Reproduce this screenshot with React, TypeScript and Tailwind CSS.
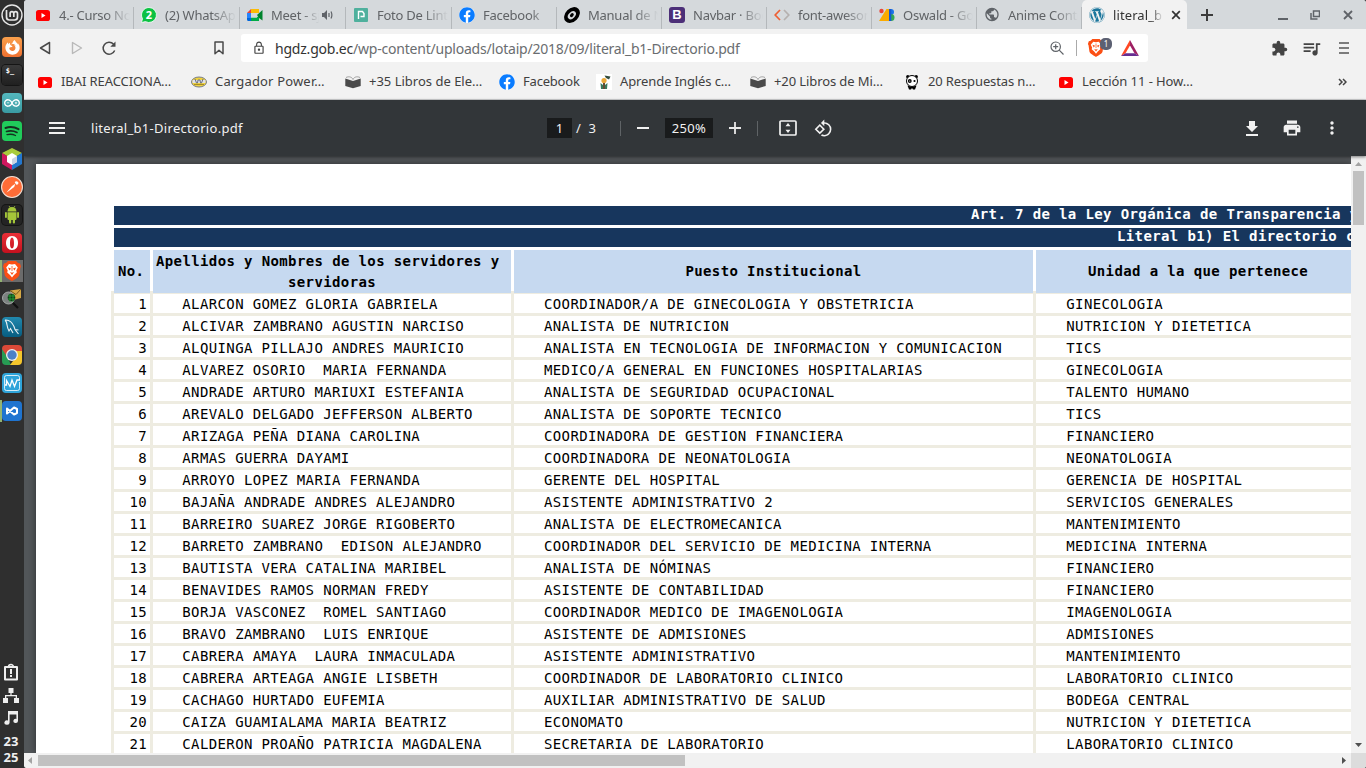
import React from 'react';
import { FaFacebook, FaWordpress, FaFirefoxBrowser } from 'react-icons/fa';
import { SiArduino } from 'react-icons/si';
import { MdExtension, MdQueueMusic, MdPrint, MdMoreVert, MdRotate90DegreesCcw, MdLockOutline, MdPublic } from 'react-icons/md';

const Book = () => (
  <svg width="16" height="16" viewBox="0 0 16 16">
    <path d="M.3 4.500L8 7l7.700-2.500v7.500L8 14.300.3 12z" fill="#4a4a4a" />
    <path d="M1 3.500C4 2 7 3 8 5.500 9 3 12 2 15 3.500" fill="none" stroke="#999" strokeWidth=".9" />
  </svg>
);

const Youtube = () => (
  <svg width="16" height="16" viewBox="0 0 16 16">
    <rect x="1" y="3" width="14" height="11" rx="2.600" fill="#f00" />
    <path d="M6.500 6v5l4-2.500z" fill="#fff" />
  </svg>
);

const Facebook = () => (
  <span className="flex size-4 items-center justify-center rounded-full bg-white text-[#0a7cff]">
    <FaFacebook size={16} />
  </span>
);

const Whatsapp = () => (
  <svg width="16" height="16" viewBox="0 0 16 16">
    <path d="M8 .5a7.500 7.500 0 11-3.600 14.100L.5 15.500l1-3.800A7.500 7.500 0 018 .5z" fill="#0cc143" stroke="#fff" strokeWidth=".8" />
    <text x="8" y="12" textAnchor="middle" fontSize="11" fontWeight="700" fill="#fff" fontFamily="Noto Sans, sans-serif">2</text>
  </svg>
);

const Meet = () => (
  <svg width="16" height="16" viewBox="0 0 16 16">
    <path d="M4 2h8v4H4z" fill="#fbbc04" />
    <path d="M0 6l4-4v4z" fill="#ea4335" />
    <path d="M0 6h4v5H0z" fill="#2684fc" />
    <path d="M0 11h4v3H1.500A1.500 1.500 0 010 12.500z" fill="#0066da" />
    <path d="M4 10.500h5.500L12 9v5H4z" fill="#00ac47" />
    <path d="M4 6h6v4.500H4z" fill="#d5d9dc" />
    <path d="M10 8l5.500-5v10.500L12 11z" fill="#00832d" />
  </svg>
);

const PdfDrive = () => (
  <svg width="16" height="16" viewBox="0 0 16 16">
    <rect x="1" y="1" width="14" height="14" rx="1" fill="#4fb09d" />
    <path d="M5.500 12V4.500h4l1.500 2v3H7.500" fill="none" stroke="#fff" strokeWidth="1.400" />
  </svg>
);

const Disc = () => (
  <svg width="16" height="16" viewBox="0 0 16 16">
    <ellipse cx="8" cy="8" rx="9" ry="6.600" transform="rotate(-45 8 8)" fill="#000" />
    <ellipse cx="7.800" cy="8" rx="4.700" ry="3.200" transform="rotate(-45 8 8)" fill="#d5d9dc" />
    <ellipse cx="7.800" cy="8" rx="2.200" ry="1.600" transform="rotate(-45 8 8)" fill="#000" />
  </svg>
);

const Bootstrap = () => (
  <span className="flex size-4 items-center justify-center rounded-[3px] bg-[#4c2f78] font-['Liberation_Sans',sans-serif] text-[13px] leading-none font-bold text-white">B</span>
);

const Code = () => (
  <svg width="16" height="16" viewBox="0 0 16 16" fill="none" strokeWidth="1.700">
    <path d="M6 3L1.200 8 6 13" stroke="#ee6034" />
    <path d="M10 3l4.800 5L10 13" stroke="#b5b0ae" />
  </svg>
);

const GoogleFonts = () => (
  <svg width="16" height="16" viewBox="0 0 16 16">
    <path d="M7.500 2h2.500v12H0z" fill="#fbab00" />
    <circle cx="2.500" cy="4" r="2.200" fill="#ea4335" />
    <path d="M10 2h2a3 3 0 010 6h-2z" fill="#1a73e8" />
    <path d="M10 7h2a3.500 3.500 0 010 7h-2z" fill="#34a853" />
    <path d="M10 2h2.300v12H10z" fill="#1558d0" />
  </svg>
);

const Hat = () => (
  <svg width="16" height="16" viewBox="0 0 16 16">
    <ellipse cx="8" cy="8" rx="7.500" ry="5" fill="#efd23f" stroke="#777d8c" />
    <path d="M1.500 6h13v3h-13z" fill="#dfe1e8" />
    <path d="M4 5l1.500 4h1L7 6h2l.5 3h1L12 5" stroke="#6a7083" fill="none" />
    <path d="M3 10.500h10" stroke="#a78e25" />
  </svg>
);

const Flower = () => (
  <svg width="16" height="16" viewBox="0 0 16 16">
    <path fill="#fff" d="M0 0h16v16H0z" />
    <circle cx="8" cy="6.500" r="2.600" fill="#e9a83a" />
    <path d="M8.500 1.500l6 1-1.500 3-3-1.500z" fill="#344d3d" />
    <path d="M4.500 9l2.500 2v4H5zM11.500 9L9 11v4h2z" fill="#39795c" />
    <path d="M7 9h2v6H7z" fill="#654c35" />
  </svg>
);

const Panda = () => (
  <svg width="16" height="16" viewBox="0 0 16 16">
    <circle cx="3.800" cy="2.700" r="1.700" /><circle cx="12.200" cy="2.700" r="1.700" />
    <circle cx="8" cy="7" r="5.500" fill="#fff" stroke="#000" />
    <circle cx="5.800" cy="7" r="1.900" /><circle cx="10.500" cy="7" r="1.100" />
    <circle cx="5.800" cy="7" r=".6" fill="#fff" />
    <path d="M3.500 11.500l1.500 4h2L8 14l1 1.500h2l1.500-4L8 13z" />
  </svg>
);

type Tab = { icon: React.ReactNode; text: string; w: string; sound?: boolean };
const tabs: Tab[] = [
  { icon: <Youtube />, text: '4.- Curso No', w: 'w-[106px]' },
  { icon: <Whatsapp />, text: '(2) WhatsApp', w: 'w-[106px]' },
  { icon: <Meet />, text: 'Meet - sjb', w: 'w-[106px]', sound: true },
  { icon: <PdfDrive />, text: 'Foto De Linte', w: 'w-[106px]' },
  { icon: <Facebook />, text: 'Facebook', w: 'w-[105px]' },
  { icon: <Disc />, text: 'Manual de N', w: 'w-[105px]' },
  { icon: <Bootstrap />, text: 'Navbar · Boo', w: 'w-[105px]' },
  { icon: <Code />, text: 'font-awesom', w: 'w-[105px]' },
  { icon: <GoogleFonts />, text: 'Oswald - Goo', w: 'w-[105px]' },
  { icon: <MdPublic size={17} color="#5f6368" />, text: 'Anime Contr', w: 'w-[105px]' },
];

const bookmarks = [
  { icon: <Youtube />, text: 'IBAI REACCIONA…', w: 'w-[154px]', cls: 'tracking-[-0.08px]' },
  { icon: <Hat />, text: 'Cargador Power…', w: 'w-[154px]', cls: 'tracking-[0.17px]' },
  { icon: <Book />, text: '+35 Libros de Ele…', w: 'w-[154px]', cls: 'tracking-[0px]' },
  { icon: <Facebook />, text: 'Facebook', w: 'w-[97px]', cls: 'tracking-[-0.2px]' },
  { icon: <Flower />, text: 'Aprende Inglés c…', w: 'w-[154px]', cls: 'tracking-[-0.1px]' },
  { icon: <Book />, text: '+20 Libros de Mi…', w: 'w-[154px]', cls: 'tracking-[-0.1px]' },
  { icon: <Panda />, text: '20 Respuestas n…', w: 'w-[154px]', cls: 'tracking-[-0.13px]' },
  { icon: <Youtube />, text: 'Lección 11 - How…', w: 'w-[154px]', cls: 'tracking-[-0.08px]' },
];

const rows: [string, string, string][] = [
  ['ALARCON GOMEZ GLORIA GABRIELA', 'COORDINADOR/A DE GINECOLOGIA Y OBSTETRICIA', 'GINECOLOGIA'],
  ['ALCIVAR ZAMBRANO AGUSTIN NARCISO', 'ANALISTA DE NUTRICION', 'NUTRICION Y DIETETICA'],
  ['ALQUINGA PILLAJO ANDRES MAURICIO', 'ANALISTA EN TECNOLOGIA DE INFORMACION Y COMUNICACION', 'TICS'],
  ['ALVAREZ OSORIO  MARIA FERNANDA', 'MEDICO/A GENERAL EN FUNCIONES HOSPITALARIAS', 'GINECOLOGIA'],
  ['ANDRADE ARTURO MARIUXI ESTEFANIA', 'ANALISTA DE SEGURIDAD OCUPACIONAL', 'TALENTO HUMANO'],
  ['AREVALO DELGADO JEFFERSON ALBERTO', 'ANALISTA DE SOPORTE TECNICO', 'TICS'],
  ['ARIZAGA PEÑA DIANA CAROLINA', 'COORDINADORA DE GESTION FINANCIERA', 'FINANCIERO'],
  ['ARMAS GUERRA DAYAMI', 'COORDINADORA DE NEONATOLOGIA', 'NEONATOLOGIA'],
  ['ARROYO LOPEZ MARIA FERNANDA', 'GERENTE DEL HOSPITAL', 'GERENCIA DE HOSPITAL'],
  ['BAJAÑA ANDRADE ANDRES ALEJANDRO', 'ASISTENTE ADMINISTRATIVO 2', 'SERVICIOS GENERALES'],
  ['BARREIRO SUAREZ JORGE RIGOBERTO', 'ANALISTA DE ELECTROMECANICA', 'MANTENIMIENTO'],
  ['BARRETO ZAMBRANO  EDISON ALEJANDRO', 'COORDINADOR DEL SERVICIO DE MEDICINA INTERNA', 'MEDICINA INTERNA'],
  ['BAUTISTA VERA CATALINA MARIBEL', 'ANALISTA DE NÓMINAS', 'FINANCIERO'],
  ['BENAVIDES RAMOS NORMAN FREDY', 'ASISTENTE DE CONTABILIDAD', 'FINANCIERO'],
  ['BORJA VASCONEZ  ROMEL SANTIAGO', 'COORDINADOR MEDICO DE IMAGENOLOGIA', 'IMAGENOLOGIA'],
  ['BRAVO ZAMBRANO  LUIS ENRIQUE', 'ASISTENTE DE ADMISIONES', 'ADMISIONES'],
  ['CABRERA AMAYA  LAURA INMACULADA', 'ASISTENTE ADMINISTRATIVO', 'MANTENIMIENTO'],
  ['CABRERA ARTEAGA ANGIE LISBETH', 'COORDINADOR DE LABORATORIO CLINICO', 'LABORATORIO CLINICO'],
  ['CACHAGO HURTADO EUFEMIA', 'AUXILIAR ADMINISTRATIVO DE SALUD', 'BODEGA CENTRAL'],
  ['CAIZA GUAMIALAMA MARIA BEATRIZ', 'ECONOMATO', 'NUTRICION Y DIETETICA'],
  ['CALDERON PROAÑO PATRICIA MAGDALENA', 'SECRETARIA DE LABORATORIO', 'LABORATORIO CLINICO'],
];

const Launcher = ({ bg, children, active, open }: { bg: string; children: React.ReactNode; active?: boolean; open?: boolean }) => (
  <div className="flex h-7 w-6 shrink-0 items-center">
    <div className={'flex h-[22px] w-[23px] items-center border-l-2 ' + (open ? 'border-[#92b372] ' : 'border-transparent ') + (active ? 'bg-[#6b6b6b]' : '')}>
      <div className={'flex size-5 shrink-0 items-center justify-center rounded-[4px] ' + bg}>{children}</div>
    </div>
  </div>
);

const Brave = ({ size }: { size: number }) => (
  <svg width={size} height={size} viewBox="0 0 20 20">
    <path d="M6 0h8l2 2 2 .5 1 3-.7 1.500-1 7c-.4 2-4.300 4.500-7.300 6-3-1.500-6.900-4-7.300-6L1.700 7 1 5.500l1-3L4 2z" fill="#fb4f14" />
    <path d="M10 3.500L13 3l2.800 3.500-1.500 3 .5 2L12 14l-2 2.500L8 14l-2.800-2.500.5-2-1.500-3L7 3z" fill="#fff" />
    <path d="M6 6.500l3 1-1.500 2zM14 6.500l-3 1 1.500 2zM8 11l2 .8 2-.8-2 3z" fill="#fb4f14" />
    <path d="M10 5v5" stroke="#fb4f14" strokeWidth=".8" />
  </svg>
);

const Sidebar = () => (
  <aside className="flex h-full w-6 shrink-0 flex-col bg-[#2f2f2f]">
    <div className="flex h-[33px] w-[23px] shrink-0 items-start justify-center pt-[4px]">
      <svg width="22" height="22" viewBox="0 0 22 22" fill="none" stroke="#e6e6e6">
        <circle cx="11" cy="11" r="10" strokeWidth="1.400" />
        <path d="M5.500 6v7a3 3 0 003 3h5a3 3 0 003-3V9.500a1.850 1.850 0 00-3.700 0V13m0-3.500a1.850 1.850 0 00-3.700 0V13" strokeWidth="1.700" />
      </svg>
    </div>
    <Launcher bg="bg-linear-to-b from-[#f9a04c] to-[#ee7030]"><FaFirefoxBrowser size={15} color="#fff" /></Launcher>
    <Launcher bg="bg-linear-to-b from-[#3a3a3a] to-[#202020] ring-1 ring-[#151515]">
      <span className="-mt-2 -ml-1 font-['DejaVu_Sans_Mono',monospace] text-[7px] font-bold text-white">$_</span>
    </Launcher>
    <Launcher bg="bg-linear-to-b from-[#54b8be] to-[#3a9ba2]"><SiArduino size={16} color="#fff" /></Launcher>
    <Launcher bg="bg-[#20cc5b]">
      <svg width="16" height="16" viewBox="0 0 16 16" fill="none" stroke="#15301f" strokeLinecap="round">
        <path d="M1.500 5c4-1.400 9-1 13 1.200" strokeWidth="2" />
        <path d="M2.500 8.500c4-1.100 7.500-.6 10.500 1" strokeWidth="1.600" />
        <path d="M3 11.700c3-.8 6-.5 8.500.8" strokeWidth="1.300" />
      </svg>
    </Launcher>
    <Launcher bg="">
      <svg className="shrink-0" width="20" height="22" viewBox="0 0 20 22">
        <path d="M0 5L10 0l10 5-10 6z" fill="#a9cb3b" /><path d="M0 5l10 6v11L0 16z" fill="#d0185e" /><path d="M20 5l-10 6v11l10-6z" fill="#2377cf" />
        <path d="M5 8L10 5l5 3v6l-5 3-5-3z" fill="#fff" /><path d="M10 11l5-3v6l-5 3z" fill="#cbd3e3" />
      </svg>
    </Launcher>
    <Launcher bg="">
      <svg className="-mx-[1px] shrink-0" width="22" height="22" viewBox="0 0 20 20">
        <circle cx="10" cy="10" r="9.500" fill="#ff6c37" stroke="#f2ddd2" />
        <path d="M5 15l5-6 3-2L12 10 6.500 14zM12.500 6a1.700 1.700 0 113 1.500l-1.500.5z" fill="#fff" />
      </svg>
    </Launcher>
    <Launcher bg="bg-[#242424] ring-1 ring-[#151515]">
      <svg width="16" height="18" viewBox="0 0 16 18" fill="#a4c639">
        <path d="M3.500 5.500a4.500 4.500 0 019 0z" /><path d="M5 0l1.500 2M11 0L9.500 2" stroke="#a4c639" strokeWidth=".8" />
        <path d="M3.500 6.200h9V13a1 1 0 01-1 1h-7a1 1 0 01-1-1z" />
        <rect x="1" y="6" width="1.900" height="6" rx=".9" /><rect x="13.100" y="6" width="1.900" height="6" rx=".9" />
        <rect x="5" y="12.500" width="2.200" height="5" rx="1" /><rect x="8.800" y="12.500" width="2.200" height="5" rx="1" />
      </svg>
    </Launcher>
    <Launcher bg="bg-linear-to-b from-[#ea2e37] to-[#c4101e]">
      <svg width="16" height="16" viewBox="0 0 16 16"><path fillRule="evenodd" d="M8 1c4 0 6 3 6 7s-2 7-6 7-6-3-6-7 2-7 6-7zm0 1.500C6.500 2.500 6 5 6 8s.5 5.500 2 5.500S10 11 10 8s-.5-5.500-2-5.500z" fill="#fff" /></svg>
    </Launcher>
    <Launcher bg="" active open><Brave size={20} /></Launcher>
    <Launcher bg="">
      <svg width="20" height="20" viewBox="0 0 20 20">
        <path d="M8 1.500l11-1.500v9l-8 2z" fill="#d5a844" /><path d="M8 1.500l6 4 5-5.500" fill="none" stroke="#78591d" />
        <circle cx="6.500" cy="9" r="6" fill="#7c8180" stroke="#a5aaa9" /><circle cx="9.500" cy="8.500" r="3.800" fill="#123f19" />
        <path d="M6 7h7M6 10h7M8 5v8M11 5v8" stroke="#25b33a" strokeWidth=".7" />
        <path d="M11 14l5 5" stroke="#111" strokeWidth="2.200" />
      </svg>
    </Launcher>
    <Launcher bg="bg-linear-to-b from-[#2189ae] to-[#075d81]">
      <svg width="18" height="18" viewBox="0 0 18 18" fill="none" stroke="#e8f1f4" strokeWidth="1.100"><path d="M2 2c4-.5 7 2 9 6.500l1 3 3.500 4.500M2 2c3 3 1 6 4 11l1.500-2.500L10 15M12 11.500l3.500.5" /></svg>
    </Launcher>
    <Launcher bg="overflow-hidden">
      <svg width="20" height="20" viewBox="0 0 20 20">
        <path d="M0 0h20v7H10L5 14 0 5z" fill="#dc4938" /><path d="M0 4l6 9 3 7H0z" fill="#279b54" /><path d="M10 6h10v14H8l6-8z" fill="#f5c62c" />
        <circle cx="10" cy="10" r="6" fill="#eee" /><circle cx="10" cy="10" r="4.700" fill="#4b80c8" />
      </svg>
    </Launcher>
    <Launcher bg="bg-[#2fa4da]">
      <svg width="18" height="18" viewBox="0 0 18 18" fill="none" stroke="#fff"><path d="M1.500 10V3.500a2 2 0 012-2h11a2 2 0 012 2V6M1.500 12v2.500a2 2 0 002 2h11a2 2 0 002-2V8" opacity=".8" /><path d="M1 11h2.500V6.500L7 12.500 9 6l2.500 6.500L14 6h3" strokeWidth="1.300" /></svg>
    </Launcher>
    <Launcher bg="bg-[#1f74d0]" open>
      <svg width="14" height="14" viewBox="0 0 14 14" fill="none" stroke="#fff" strokeWidth="2" strokeLinejoin="round"><path d="M2 4.500l7 6 3-1.500V5L9 3.500l-7 6zM2 4.500v5" /></svg>
    </Launcher>
    <div className="mt-auto flex w-[22px] flex-col items-center text-[#eee]">
      <svg width="16" height="18" viewBox="0 0 16 18" fill="none" stroke="#eee" strokeWidth="2"><path d="M2 4h12v12.500H2z" strokeLinejoin="round" /><path d="M5.500 4a2.500 2.500 0 015 0" strokeWidth="1.500" /><path d="M8 6v5M8 12v2" /></svg>
      <svg className="mt-[7px]" width="16" height="15" viewBox="0 0 16 15" fill="#eee"><path d="M5.500 0h5v5H8.600v2H14v3h2v5h-5v-5h1.700V8.300H3.300V10H5v5H0v-5h2V7h5.400V5H5.500z" /></svg>
      <svg className="mt-[8px]" width="14" height="14" viewBox="0 0 14 14" fill="#eee"><path d="M4 0h10v10a2.300 2 0 11-1.600-2V3.500H5.600v8a2.600 2.200 0 11-1.600-2z" /></svg>
      <div className="mt-[8px] flex flex-col items-center pb-[3px] font-['Noto_Sans',sans-serif] text-[13px] leading-4 font-bold"><span>23</span><span>25</span></div>
    </div>
  </aside>
);

const TabStrip = () => (
  <div className="flex h-[29px] shrink-0 bg-[#d5d9dc] pl-[3.500px]">
    {tabs.map((t) => (
      <div key={t.text} className={'flex shrink-0 items-center gap-2 pl-[7.500px] ' + t.w}>
        <span className="flex size-4 shrink-0 items-center justify-center">{t.icon}</span>
        <span className="-mr-[5px] min-w-0 flex-1 overflow-hidden [mask-image:linear-gradient(to_right,#000_66%,transparent_100%)] pt-px text-[13px] leading-[29px] tracking-[-0.25px] whitespace-nowrap text-[#606366]">{t.text}</span>
        {t.sound && (
          <svg className="mr-1 shrink-0" width="11" height="12" viewBox="0 0 11 12"><path d="M0 4h2l3-3v10L2 8H0z" fill="#5f6368" /><path d="M7 4v4M9 2.500c1 2 1 5 0 7" stroke="#5f6368" strokeWidth="1.200" fill="none" /></svg>
        )}
        <span className="mt-[7px] h-[22px] w-px shrink-0 bg-[#b4b8bb]" />
      </div>
    ))}
    <div className="flex w-[105.500px] shrink-0 items-center gap-2 rounded-t-[5px] bg-[#f2f2f2] pl-[7.500px]">
      <FaWordpress size={16} color="#1b769c" className="shrink-0" />
      <span className="w-[50px] overflow-hidden [mask-image:linear-gradient(to_right,#000_76%,transparent)] pt-px text-[13px] leading-[29px] tracking-[0.1px] whitespace-nowrap text-[#333]">literal_b1</span>
      <svg className="shrink-0" width="10" height="10" viewBox="0 0 10 10"><path d="M1.200 1.200l7.600 7.600m0-7.600L1.200 8.800" stroke="#333" strokeWidth="1.700" /></svg>
    </div>
    <div className="flex flex-1 items-center pl-[14px]">
      <svg width="12" height="12" viewBox="0 0 12 12"><path d="M6 0v12M0 6h12" stroke="#3c3c3c" strokeWidth="2" /></svg>
      <svg className="ml-auto" width="10" height="10" viewBox="0 0 10 10"><path d="M0 9h10" stroke="#5f6368" strokeWidth="2" /></svg>
      <svg className="ml-[22px]" width="10" height="10" viewBox="0 0 10 10" fill="none" stroke="#5f6368" strokeWidth="1.500"><path d="M3.500 1h6v5.500h-6zM1 3v6h6.500" /></svg>
      <svg className="mr-[13px] ml-[23px]" width="10" height="10" viewBox="0 0 10 10"><path d="M1 1l8 8m0-8L1 9" stroke="#5f6368" strokeWidth="1.800" /></svg>
    </div>
  </div>
);

const NavBar = () => (
  <div className="flex h-[38px] shrink-0 items-center bg-[#f2f2f2] pl-[15px]">
    <svg width="12" height="14" viewBox="0 0 12 14"><path d="M10.500 1.500v11L1.500 7z" fill="none" stroke="#4a4a4a" strokeWidth="1.500" strokeLinejoin="round" /></svg>
    <svg className="ml-[20px]" width="12" height="14" viewBox="0 0 12 14"><path d="M1.500 1.500v11l9-5.500z" fill="none" stroke="#b9b9b9" strokeWidth="1.400" strokeLinejoin="round" /></svg>
    <svg className="ml-[18px]" width="16" height="16" viewBox="0 0 16 16"><path d="M13.700 10.500A6 6 0 1112.500 4" fill="none" stroke="#4a4a4a" strokeWidth="1.500" /><path d="M14.500 1.500v5.200h-5.200z" fill="#4a4a4a" /></svg>
    <svg className="ml-[97px]" width="10" height="14" viewBox="0 0 10 14"><path d="M1 1h8v11.800L5 9.300l-4 3.500z" fill="none" stroke="#4a4a4a" strokeWidth="1.500" strokeLinejoin="round" /></svg>
    <div className="ml-[17px] flex h-7 w-[907px] items-center rounded-[3px] bg-white pl-[11px]">
      <MdLockOutline size={14} color="#444" />
      <span className="ml-[9px] text-[14px] tracking-[-0.21px] whitespace-nowrap text-[#6a6d70]"><span className="text-[#333]">hgdz.gob.ec</span>/wp-content/uploads/lotaip/2018/09/literal_b1-Directorio.pdf</span>
      <svg className="ml-auto" width="14" height="14" viewBox="0 0 14 14" fill="none" stroke="#5f6368" strokeWidth="1.200"><circle cx="5.700" cy="5.700" r="4.700" /><path d="M9.200 9.200l4.300 4.300M3.200 5.700h5M5.700 3.200v5" /></svg>
      <span className="ml-[12px] h-4 w-px bg-[#aaa]" />
      <span className="relative ml-[10px]">
        <Brave size={18} />
        <span className="absolute -top-[1px] left-[13px] flex size-3 items-center justify-center rounded-[5px] bg-[#5c6072] text-[8px] leading-none text-white">1</span>
      </span>
      <svg className="mr-[9px] ml-[16px]" width="18" height="16" viewBox="0 0 18 16"><path d="M9 0L0 16l4.500-2.800L9 5.500z" fill="#ff4724" /><path d="M9 0l9 16-4.500-2.800L9 5.500z" fill="#9e1f63" /><path d="M0 16h18l-4.500-2.800h-9z" fill="#662d91" /></svg>
    </div>
    <MdExtension className="ml-[123px]" size={17} color="#444" />
    <MdQueueMusic className="ml-[13px]" size={21} color="#444" />
    <svg className="ml-[17px]" width="10" height="12" viewBox="0 0 10 12"><path d="M0 1h10M0 6h10M0 11h10" stroke="#555" strokeWidth="1.600" /></svg>
  </div>
);

const BookmarkBar = () => (
  <div className="flex h-[33px] shrink-0 items-center border-b border-[#d0d2d3] bg-[#f2f2f2] pb-[3px] pl-[13px]">
    {bookmarks.map((b) => (
      <div key={b.text} className={'flex shrink-0 items-center gap-2 ' + b.w}>
        <span className="shrink-0">{b.icon}</span>
        <span className={'pt-px text-[13px] whitespace-nowrap text-[#404040] ' + b.cls}>{b.text}</span>
      </div>
    ))}
    <svg className="mr-[19px] ml-auto" width="9" height="8" viewBox="0 0 9 8" fill="none" stroke="#444" strokeWidth="1.500"><path d="M1 1l3 3-3 3M5 1l3 3-3 3" /></svg>
  </div>
);

const PdfBar = () => (
  <div className="z-10 flex h-14 shrink-0 items-center bg-[#323639] pl-[25px] text-[#f1f1f1] shadow-[0_1px_3px_rgba(0,0,0,0.5)]">
    <svg width="16" height="12" viewBox="0 0 16 12"><path d="M0 1h16M0 6h16M0 11h16" stroke="#f1f1f1" strokeWidth="2" /></svg>
    <span className="ml-[26px] w-[456px] pt-px text-[13px] tracking-[0.29px]">literal_b1-Directorio.pdf</span>
    <span className="flex h-5 w-[25px] items-center justify-center bg-[#191b1c] pt-px text-[13px]">1</span>
    <span className="ml-[4px] w-[44px] pt-px text-[13px] tracking-[0.3px] whitespace-pre">/  3</span>
    <span className="h-[15px] w-px bg-[#5f6366]" />
    <span className="ml-[16px] h-[2px] w-3 bg-[#f1f1f1]" />
    <span className="ml-[16px] flex h-5 w-12 items-center justify-center bg-[#191b1c] pt-px text-[13px] tracking-[0.3px]">250%</span>
    <svg className="ml-[16px]" width="12" height="12" viewBox="0 0 12 12"><path d="M6 0v12M0 6h12" stroke="#e8e8e8" strokeWidth="1.800" /></svg>
    <span className="ml-[16px] h-[15px] w-px bg-[#5f6366]" />
    <svg className="ml-[21px]" width="18" height="16" viewBox="0 0 18 16"><rect x="1" y="1" width="16" height="14" rx="1" fill="none" stroke="#f1f1f1" strokeWidth="1.700" /><path d="M9 3l2.500 3.200h-5zM9 13L6.500 9.800h5z" fill="#f1f1f1" /></svg>
    <MdRotate90DegreesCcw className="ml-[17px]" size={19} />
    <svg className="ml-auto" width="12" height="15" viewBox="0 0 12 15" fill="#f1f1f1"><path d="M3 0h6v5h3l-6 6-6-6h3zM0 13h12v2H0z" /></svg>
    <MdPrint className="ml-[24px]" size={20} />
    <MdMoreVert className="mr-[24px] ml-[20px]" size={20} />
  </div>
);

const cols = 'grid grid-cols-[36px_358px_519px_315px] gap-x-[3px]';

const PdfPage = () => (
  <div className="mt-2 ml-3 min-w-0 flex-1 overflow-hidden bg-white pt-[42px] font-['DejaVu_Sans_Mono','Liberation_Mono',monospace] text-[14px] tracking-[0.378px] text-black shadow-[0_0_7px_rgba(0,0,0,0.45)]">
    <div className="ml-[78px] flex flex-col gap-[3px] font-bold text-white">
      <div className="h-[19px] overflow-hidden bg-[#17365d] pl-[857px] leading-[17px] whitespace-nowrap">Art. 7 de la Ley Orgánica de Transparencia y</div>
      <div className="h-[19px] overflow-hidden bg-[#17365d] pl-[1003px] leading-[17px] whitespace-nowrap">Literal b1) El directorio c</div>
      <div className={'h-[41px] text-center leading-[21px] text-black ' + cols}>
        <div className="flex items-center bg-[#c6d9f0] pl-[4px]">No.</div>
        <div className="bg-[#c6d9f0] pt-px text-left whitespace-nowrap"><div className="pl-[3px]">Apellidos y Nombres de los servidores y</div><div className="pl-[135px]">servidoras</div></div>
        <div className="flex items-center justify-center bg-[#c6d9f0]">Puesto Institucional</div>
        <div className="flex items-center bg-[#c6d9f0] pl-[52px]">Unidad a la que pertenece</div>
      </div>
    </div>
    <div className="ml-[75px] flex flex-col gap-[3px] bg-[#eeece1] py-[3px] pl-[3px] leading-[21px]">
      {rows.map((r, i) => (
        <div key={r[0]} className={'h-[19px] ' + cols}>
          <div className="h-[19px] bg-white pr-[3px] text-right">{i + 1}</div>
          <div className="h-[19px] bg-white pl-[29.300px] whitespace-pre">{r[0]}</div>
          <div className="h-[19px] bg-white pl-[30px] whitespace-pre">{r[1]}</div>
          <div className="h-[19px] bg-white pl-[30.300px] whitespace-pre">{r[2]}</div>
        </div>
      ))}
    </div>
  </div>
);

export default function App() {
  return (
    <div className="flex h-[768px] w-[1366px] overflow-hidden bg-black font-['Noto_Sans',sans-serif]">
      <Sidebar />
      <div className="flex min-w-0 flex-1 flex-col overflow-hidden rounded-[2px]">
        <TabStrip />
        <NavBar />
        <BookmarkBar />
        <PdfBar />
        <div className="flex h-[597px] shrink-0 bg-[#525659]">
          <PdfPage />
          <div className="z-[1] flex w-[15px] shrink-0 flex-col items-center bg-[#f1f1f1]">
            <svg className="mt-[6px]" width="7" height="4" viewBox="0 0 7 4"><path d="M0 4l3.500-4L7 4z" fill="#a3a3a3" /></svg>
            <div className="mt-[5px] h-[54px] w-[11px] bg-[#c1c1c1]" />
            <svg className="mt-auto mb-[6px]" width="7" height="4" viewBox="0 0 7 4"><path d="M0 0l3.500 4L7 0z" fill="#505050" /></svg>
          </div>
        </div>
        <div className="z-[1] flex h-[15px] shrink-0 items-center bg-[#f1f1f1]">
          <svg className="ml-[4px]" width="4" height="7" viewBox="0 0 4 7"><path d="M4 0L0 3.500 4 7z" fill="#a3a3a3" /></svg>
          <div className="ml-[6px] h-[11px] w-[647px] bg-[#c1c1c1]" />
          <svg className="mr-[5px] ml-auto" width="4" height="7" viewBox="0 0 4 7"><path d="M0 0l4 3.500L0 7z" fill="#505050" /></svg>
          <div className="size-[15px] bg-[#dcdcdc]" />
        </div>
      </div>
    </div>
  );
}
